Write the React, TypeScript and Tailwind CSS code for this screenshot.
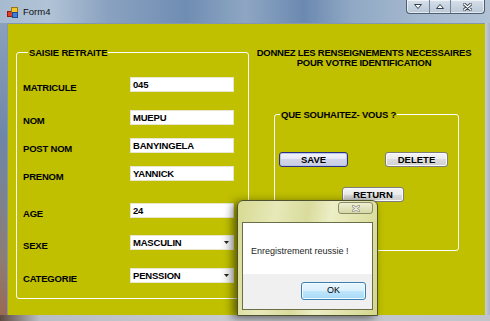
import clsx from "clsx";

const fields = [
  { label: "MATRICULE", value: "045", combo: false, mt: "mt-[19px]" },
  { label: "NOM", value: "MUEPU", combo: false, mt: "mt-[18px]" },
  { label: "POST NOM", value: "BANYINGELA", combo: false, mt: "mt-[13px]" },
  { label: "PRENOM", value: "YANNICK", combo: false, mt: "mt-[13px]" },
  { label: "AGE", value: "24", combo: false, mt: "mt-[22px]" },
  { label: "SEXE", value: "MASCULIN", combo: true, mt: "mt-[17px]" },
  { label: "CATEGORIE", value: "PENSSION", combo: true, mt: "mt-[18px]" },
];

function AppIcon() {
  return (
    <svg width="11" height="11" viewBox="0 0 11 11">
      <rect x="0.5" y="4.5" width="5" height="5" fill="#e0402a" stroke="#8a1c10" />
      <rect x="4.5" y="0.5" width="6" height="5" fill="#f3c52c" stroke="#9a7410" />
      <rect x="5.5" y="5.5" width="5" height="5" fill="#3f7fd8" stroke="#1d4a8c" />
    </svg>
  );
}

function CaptionButtons() {
  return (
    <div className="mr-[5px] flex h-[14px] overflow-hidden rounded-b-[4px] border border-t-0 border-[#4d5d72] bg-[linear-gradient(#d7e0ea,#b9c7d6)] shadow-[inset_0_0_0_1px_rgba(255,255,255,0.6)]">
      <div className="flex w-[23px] items-center justify-center border-r border-[#6f8197]">
        <svg width="8" height="5" viewBox="0 0 8 5">
          <path d="M0.5 0.5h7L4 4.5z" fill="#fff" stroke="#34404f" strokeWidth="1" />
        </svg>
      </div>
      <div className="flex w-[21px] items-center justify-center border-r border-[#6f8197]">
        <svg width="8" height="5" viewBox="0 0 8 5">
          <path d="M0.5 4.5h7L4 0.5z" fill="#fff" stroke="#34404f" strokeWidth="1" />
        </svg>
      </div>
      <div className="flex w-[33px] items-center justify-center">
        <svg width="9" height="8" viewBox="0 0 9 8">
          <path d="M1 1l7 6M8 1L1 7" stroke="#34404f" strokeWidth="3" strokeLinecap="round" />
          <path d="M1 1l7 6M8 1L1 7" stroke="#fff" strokeWidth="1.4" strokeLinecap="round" />
        </svg>
      </div>
    </div>
  );
}

function WinButton({
  children,
  className,
  focused,
}: {
  children: string;
  className?: string;
  focused?: boolean;
}) {
  return (
    <button
      className={clsx(
        "flex h-[15px] items-center justify-center rounded-[3px] border text-[9.5px] leading-none font-bold text-black",
        focused
          ? "border-[#2e3080] bg-[linear-gradient(#f2f3fb,#e4e6f3_50%,#d3d6ea_50%,#c9cde4)] shadow-[inset_0_0_0_1px_#b8c6ee]"
          : "border-[#7d7d7d] bg-[linear-gradient(#f4f4f4,#ebebeb_50%,#dddddd_50%,#cfcfcf)] shadow-[inset_0_0_0_1px_#fafafa]",
        className,
      )}
    >
      {children}
    </button>
  );
}

function Field({ label, value, combo, mt }: (typeof fields)[number]) {
  return (
    <div className={clsx("flex h-[15px] items-center", mt)}>
      <span className="w-[107px] translate-y-[2.5px] text-[9.5px] leading-[11px] font-bold tracking-[-0.2px] text-black">
        {label}
      </span>
      <div className="flex h-[15px] w-[104px] items-center border border-[#e6e6cc] bg-white">
        <span className="flex-1 pl-[2px] text-[9.5px] leading-[11px] font-bold tracking-[-0.2px] text-black">
          {value}
        </span>
        {combo && (
          <div className="flex h-full w-[14px] items-center justify-center bg-[linear-gradient(90deg,#ffffff,#e9e9e9)]">
            <svg width="5" height="3" viewBox="0 0 5 3">
              <path d="M0 0h5L2.5 3z" fill="#222" />
            </svg>
          </div>
        )}
      </div>
    </div>
  );
}

function MessageBox() {
  return (
    <div className="absolute left-[237px] top-[200px] flex h-[116px] w-[141px] flex-col rounded-t-[6px] border border-[#4f5230] bg-[linear-gradient(100deg,#d7da92_0%,#e7e9b9_25%,#d9dc9c_45%,#eceec6_60%,#d4d78c_100%)] px-[4px] pb-[5px] pt-[1px] shadow-[-4px_2px_10px_rgba(0,0,0,0.55)]">
      <div className="flex h-[20px] justify-end">
        <div className="flex h-[12px] w-[35px] items-center justify-center rounded-[3px] border border-[#8a8c66] bg-[linear-gradient(#eef0d2,#d6d8a6)]">
          <svg width="8" height="7" viewBox="0 0 8 7">
            <path d="M1 1l6 5M7 1L1 6" stroke="#8a8a78" strokeWidth="2.6" strokeLinecap="round" />
            <path d="M1 1l6 5M7 1L1 6" stroke="#f4f4f4" strokeWidth="1.1" strokeLinecap="round" />
          </svg>
        </div>
      </div>
      <div className="flex flex-1 flex-col border border-[#6b6d48]">
        <div className="flex h-[51px] items-center bg-white pl-[8px] pt-[6px] text-[9px] text-[#1e1e1e]">
          Enregistrement reussie !
        </div>
        <div className="flex flex-1 items-start justify-end bg-[#f0f0f0] pr-[6px] pt-[8px]">
          <button className="flex h-[18px] w-[65px] items-center justify-center rounded-[3px] border border-[#3c7fb1] bg-[linear-gradient(#eaf6fd,#d9f0fc_50%,#bee6fd_50%,#a7d9f5)] text-[9px] text-black shadow-[inset_0_0_0_1px_#f0faff]">
            OK
          </button>
        </div>
      </div>
    </div>
  );
}

export default function App() {
  return (
    <div className="relative h-[321px] w-[490px] overflow-hidden bg-[#b4c4d6] font-['Liberation_Sans',Arial,sans-serif]">
      {/* title bar */}
      <div className="flex h-[23px] items-start bg-[linear-gradient(90deg,#a7bbd0_0%,#b1c3d6_10%,#8aa2c0_22%,#6f8db3_38%,#8ea6c3_50%,#6b89b0_62%,#91a9c5_72%,#a4b8ce_85%,#b0c2d4_100%)]">
        <div className="ml-[7px] mt-[7px]">
          <AppIcon />
        </div>
        <span className="ml-[5px] mt-[6px] text-[9.5px] leading-[12px] text-[#111]">Form4</span>
        <div className="flex-1" />
        <CaptionButtons />
      </div>
      <div className="flex h-[292px]">
        <div className="w-[7px] bg-[linear-gradient(#8aa0bc,#6e86a6_40%,#8c7d74_80%,#9a6a52)]" />
        <main className="flex w-[478px] border-l border-t border-[#8497ab] bg-[#c0c000] pl-[8px]">
          <fieldset className="mt-[23px] h-[252px] w-[233px] rounded-[3px] border border-white pl-[6px]">
            <legend className="ml-[5px] px-[1px] text-[9.5px] leading-[11px] font-bold tracking-[-0.2px] text-black">
              SAISIE RETRAITE
            </legend>
            {fields.map((f) => (
              <Field key={f.label} {...f} />
            ))}
          </fieldset>
          <div className="flex flex-1 flex-col">
            <p className="mt-[24px] pr-[6px] text-center text-[9.5px] leading-[10px] font-bold tracking-[-0.25px] text-black">
              DONNEZ LES RENSEIGNEMENTS NECESSAIRES
              <br />
              POUR VOTRE IDENTIFICATION
            </p>
            <fieldset className="ml-[25px] mt-[41px] h-[142px] w-[185px] rounded-[3px] border border-white">
              <legend className="ml-[5px] px-[1px] text-[9.5px] leading-[11px] font-bold tracking-[-0.2px] text-black">
                QUE SOUHAITEZ- VOUS ?
              </legend>
              <div className="mt-[32px] flex justify-between pl-[4px] pr-[10px]">
                <WinButton focused className="w-[69px]">
                  SAVE
                </WinButton>
                <WinButton className="w-[63px]">DELETE</WinButton>
              </div>
              <WinButton className="ml-[67px] mt-[20px] w-[62px]">RETURN</WinButton>
            </fieldset>
          </div>
        </main>
        <div className="flex-1 bg-[linear-gradient(90deg,#c6ccd3,#a9b3bf)]" />
      </div>
      <div className="h-[6px] bg-[linear-gradient(90deg,#5d4a40,#b9bec4_8%,#c9cdd2_50%,#bfc4ca)]" />
      <MessageBox />
    </div>
  );
}
